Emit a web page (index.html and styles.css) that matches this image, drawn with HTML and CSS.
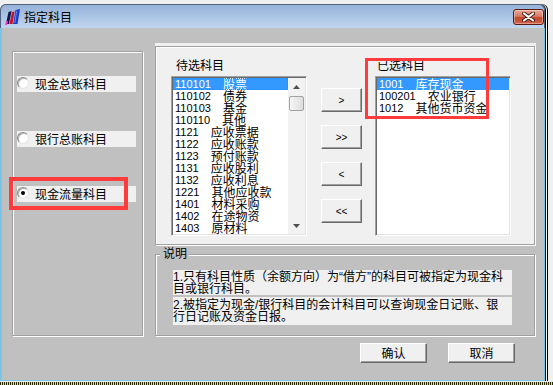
FILE: index.html
```html
<!DOCTYPE html>
<html lang="zh-CN">
<head>
<meta charset="utf-8">
<title>指定科目</title>
<link rel="stylesheet" href="styles.css">
</head>
<body>
<div class="window">
  <div class="titlebar">
    <svg class="appicon" viewBox="0 0 16 16" width="16" height="16">
      <polygon points="1,15 3.5,3 6.5,2 4,15" fill="#14144a"/>
      <polygon points="4.5,15 7,3 9.5,2.5 7.5,15" fill="#c8102e"/>
      <polygon points="8,15 10.5,1 15,0 12.5,15" fill="#1a3cc8"/>
      <polygon points="9.2,14 11.2,2 12.2,1.7 10.2,14" fill="#6a8cff"/>
      <polygon points="0,16 1,12 3,12 2,16" fill="#ff3ccf"/>
    </svg>
    <span class="title">指定科目</span>
    <div class="close">
      <svg width="13" height="10" viewBox="0 0 13 10">
        <path d="M2 1.5 L11 8.5 M11 1.5 L2 8.5" stroke="#4a1a10" stroke-width="4" stroke-linecap="round"/>
        <path d="M2 1.5 L11 8.5 M11 1.5 L2 8.5" stroke="#ffffff" stroke-width="2.2" stroke-linecap="round"/>
      </svg>
    </div>
  </div>
  <div class="client">
    <div class="main">
      <div class="leftgroup">
        <div class="opt"><span class="rb"></span><span>现金总账科目</span></div>
        <div class="opt"><span class="rb"></span><span>银行总账科目</span></div>
        <div class="opt"><span class="rb on"></span><span>现金流量科目</span></div>
        <div class="mark mark-left"></div>
      </div>
      <div class="rightcol">
        <div class="panel">
          <div class="etched">
            <div class="listcol first">
              <div class="lbl lbl-left">待选科目</div>
              <div class="listbox">
                <div class="rows">
                  <div class="row sel focus"><span class="code">110101</span><span>股票</span></div>
                  <div class="row"><span class="code">110102</span><span>债券</span></div>
                  <div class="row"><span class="code">110103</span><span>基金</span></div>
                  <div class="row"><span class="code">110110</span><span>其他</span></div>
                  <div class="row"><span class="code">1121</span><span>应收票据</span></div>
                  <div class="row"><span class="code">1122</span><span>应收账款</span></div>
                  <div class="row"><span class="code">1123</span><span>预付账款</span></div>
                  <div class="row"><span class="code">1131</span><span>应收股利</span></div>
                  <div class="row"><span class="code">1132</span><span>应收利息</span></div>
                  <div class="row"><span class="code">1221</span><span>其他应收款</span></div>
                  <div class="row"><span class="code">1401</span><span>材料采购</span></div>
                  <div class="row"><span class="code">1402</span><span>在途物资</span></div>
                  <div class="row"><span class="code">1403</span><span>原材料</span></div>
                </div>
                <div class="vscroll">
                  <div class="sbtn"><svg width="7" height="4" viewBox="0 0 7 4"><polygon points="0,4 3.5,0 7,4" fill="#505050"/></svg></div>
                  <div class="thumb"></div>
                  <div class="spacer"></div>
                  <div class="sbtn"><svg width="7" height="4" viewBox="0 0 7 4"><polygon points="0,0 7,0 3.5,4" fill="#505050"/></svg></div>
                </div>
              </div>
            </div>
            <div class="btncol">
              <button class="btn mv">&gt;</button>
              <button class="btn mv">&gt;&gt;</button>
              <button class="btn mv">&lt;</button>
              <button class="btn mv">&lt;&lt;</button>
            </div>
            <div class="listcol second">
              <div class="lbl lbl-right">已选科目</div>
              <div class="listbox">
                <div class="rows">
                  <div class="row sel"><span class="code">1001</span><span>库存现金</span></div>
                  <div class="row"><span class="code">100201</span><span>农业银行</span></div>
                  <div class="row"><span class="code">1012</span><span>其他货币资金</span></div>
                </div>
              </div>
            </div>
          </div>
          <div class="mark mark-right"></div>
        </div>
        <div class="notes">
          <span class="legend">说明</span>
          <div class="note n1">1.只有科目性质（余额方向）为“借方”的科目可被指定为现金科<br>目或银行科目。</div>
          <div class="note n2">2.被指定为现金/银行科目的会计科目可以查询现金日记账、银<br>行日记账及资金日报。</div>
        </div>
      </div>
    </div>
    <div class="actions">
      <button class="btn act">确认</button>
      <button class="btn act">取消</button>
    </div>
  </div>
</div>
<div class="strip"></div>
</body>
</html>
```

FILE: styles.css
```css
* { box-sizing: border-box; }
html, body { margin: 0; padding: 0; }
body {
  width: 553px;
  height: 385px;
  overflow: hidden;
  background: #f0f0f0;
  font-family: "Noto Sans CJK SC", sans-serif;
  font-size: 12px;
  color: #000;
}

.window {
  margin-top: 4px;
  width: 545px;
  background: #c0c0c0;
  border-radius: 6px 6px 0 0;
  box-shadow: 1px 0 0 #000, 2px 0 0 #fff, 3px 0 0 #000;
}

.titlebar {
  height: 24px;
  display: flex;
  align-items: flex-start;
  padding: 4px 0 0 4px;
  border: 1px solid #50627c;
  border-bottom: 0;
  border-radius: 6px 6px 0 0;
  background: linear-gradient(#96b2d8, #bfd6f0);
}
.appicon { flex: none; display: block; }
.title { margin: 1px 0 0 3px; line-height: 14px; }
.close {
  margin-left: auto;
  width: 31px;
  height: 16px;
  border: 1px solid #5a1c12;
  border-radius: 3px;
  background: linear-gradient(#eaa797 0%, #d77b66 45%, #c1452b 55%, #d4644a 100%);
  box-shadow: inset 0 0 0 1px rgba(255,255,255,0.35);
  display: flex;
  align-items: center;
  justify-content: center;
}
.close svg { display: block; }

.client {
  height: 353px;
  border-left: 2px solid #79c6ea;
  border-right: 1px solid #79c6ea;
  border-bottom: 1px solid #79c6ea;
  padding: 15px 0 0 10px;
}

.main { display: flex; align-items: flex-start; }

.leftgroup {
  position: relative;
  flex: none;
  width: 131px;
  height: 285px;
  margin-top: 8px;
  border: 1px solid #a0a0a0;
  box-shadow: 1px 1px 0 #fff, inset 1px 1px 0 #fff;
  padding: 24px 0 0 4px;
}
.opt {
  display: flex;
  align-items: flex-start;
  width: 119px;
  height: 16px;
  line-height: 16px;
  background: #f0f0f0;
  margin-bottom: 39px;
}
.rb {
  flex: none;
  width: 12px;
  height: 12px;
  margin: 1px 6px 0 0;
  border-radius: 50%;
  border: 1px solid;
  border-color: #8a8a8a #e4e4e4 #e4e4e4 #8a8a8a;
  box-shadow: inset 1px 1px 0 #b4b4b4;
  background: #fff;
  display: flex;
  align-items: center;
  justify-content: center;
}
.rb.on::after {
  content: "";
  width: 4px;
  height: 4px;
  border-radius: 50%;
  background: #000;
}

.mark { position: absolute; border: 4px solid #ff3b3b; }
.mark-left { left: -4px; top: 125px; width: 119px; height: 33px; }
.mark-right { left: 210px; top: 15px; width: 124px; height: 61px; border-width: 3px; }

.rightcol { flex: none; width: 381px; margin-left: 12px; }
.panel {
  position: relative;
  height: 202px;
  padding-top: 3px;
  background: #f0f0f0;
}
.etched {
  display: flex;
  width: 380px;
  height: 199px;
  border: 1px solid #a0a0a0;
  box-shadow: 1px 1px 0 #fff, inset 1px 1px 0 #fff;
}

.listcol { flex: none; width: 136px; }
.listcol.first { margin-left: 15px; }
.listcol.second { margin-left: 13px; }
.lbl { height: 29px; padding-top: 11px; line-height: 14px; }
.lbl-left { padding-left: 5px; }
.lbl-right { padding-left: 2px; }

.listbox {
  display: flex;
  width: 136px;
  height: 160px;
  background: #fff;
  border: 1px solid;
  border-color: #a0a0a0 #fff #fff #a0a0a0;
  padding: 1px;
  box-shadow: inset 1px 1px 0 #696969, inset -1px -1px 0 #e3e3e3;
  overflow: hidden;
}
.rows { flex: 1; min-width: 0; overflow: hidden; }
.row {
  display: flex;
  align-items: flex-start;
  height: 12px;
  line-height: 12px;
  padding-left: 2px;
  white-space: nowrap;
}
.row.sel { background: #3399ff; color: #fff; }
.row.focus { outline: 1px dotted #cc6600; outline-offset: -1px; }
.code {
  font-family: "Liberation Sans", sans-serif;
  font-size: 11px;
  margin-right: 12px;
}

.vscroll {
  flex: none;
  width: 17px;
  display: flex;
  flex-direction: column;
  align-items: center;
  background: #f2f2f2;
}
.sbtn {
  flex: none;
  width: 17px;
  height: 17px;
  display: flex;
  align-items: center;
  justify-content: center;
}
.sbtn svg { display: block; }
.thumb {
  flex: none;
  width: 15px;
  height: 15px;
  margin-top: 1px;
  border: 1px solid #a2a2a2;
  border-radius: 2px;
  background: linear-gradient(90deg, #f6f6f6, #dedede);
}
.spacer { flex: 1; }

.btn {
  margin: 0;
  padding: 0;
  border: 1px solid;
  border-color: #fff #696969 #696969 #fff;
  box-shadow: inset -1px -1px 0 #a0a0a0;
  background: #f0f0f0;
  color: #000;
  display: flex;
  align-items: center;
  justify-content: center;
}
.btncol {
  flex: none;
  width: 41px;
  margin-left: 14px;
  padding-top: 41px;
  display: flex;
  flex-direction: column;
  gap: 13px;
}
.mv {
  width: 41px;
  height: 24px;
  font-family: "Liberation Sans", sans-serif;
  font-size: 10px;
}

.notes {
  position: relative;
  width: 380px;
  height: 82px;
  margin-top: 9px;
  border: 1px solid #a0a0a0;
  box-shadow: 1px 1px 0 #fff, inset 1px 1px 0 #fff;
  padding: 15px 0 0 17px;
}
.legend {
  position: absolute;
  left: 4px;
  top: -8px;
  padding: 0 2px 0 3px;
  background: #c0c0c0;
  line-height: 12px;
}
.note {
  width: 339px;
  background: #f0f0f0;
  font-family: "Liberation Sans", "Noto Sans CJK SC", sans-serif;
  font-size: 12px;
  line-height: 12px;
  white-space: nowrap;
  padding-top: 1px;
}
.n1 { height: 25px; }
.n2 { height: 28px; margin-top: 2px; padding-top: 2px; }

.actions {
  display: flex;
  justify-content: flex-end;
  gap: 21px;
  margin-top: 7px;
  padding-right: 29px;
}
.act {
  width: 67px;
  height: 20px;
  font-family: "Noto Sans CJK SC", sans-serif;
  font-size: 12px;
  line-height: 14px;
}

.strip {
  height: 4px;
  margin-top: 1px;
  background: repeating-linear-gradient(90deg, #2a2a00 0 1px, #e2e040 1px 2px);
}
```
